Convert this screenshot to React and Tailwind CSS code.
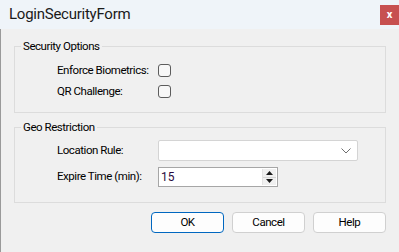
import React, { useState } from 'react';

const font = { fontFamily: 'Roboto, "Noto Sans", sans-serif' };

const Check = ({ checked, onChange }) => (
  <button
    onClick={onChange}
    className="w-[13px] h-[13px] rounded-[3px] border border-[#5c5c5c] bg-[#f7f7f7] flex items-center justify-center"
  >
    {checked && (
      <svg width="9" height="9" viewBox="0 0 9 9">
        <path d="M1 4.5 L3.5 7 L8 1.5" fill="none" stroke="#1a1a1a" strokeWidth="1.3" />
      </svg>
    )}
  </button>
);

const Group = ({ title, children, className }) => (
  <fieldset className={`mx-[13px] border border-[#dcdcdc] ${className}`}>
    <legend className="ml-[6px] px-[2px] text-[11.5px] tracking-[-0.45px] leading-[16px] text-black whitespace-nowrap">
      {title}
    </legend>
    {children}
  </fieldset>
);

export default function App() {
  const [bio, setBio] = useState(false);
  const [qr, setQr] = useState(false);
  const [minutes, setMinutes] = useState(15);

  return (
    <div className="w-[399px] h-[252px] bg-[#f0f0f0] overflow-hidden flex flex-col text-black" style={font}>
      <div className="h-[29px] shrink-0 bg-[#eff4f9] flex justify-between">
        <div className="pl-[9px] pt-[5px] text-[15px] tracking-[-0.25px] leading-[19px] text-[#1a1a1a]">LoginSecurityForm</div>
        <button className="mt-[5px] w-[19px] h-[20px] bg-[#c75050] text-white text-[11px] font-bold leading-[20px] flex items-center justify-center">
          x
        </button>
      </div>

      <div className="flex-1 flex flex-col border-l border-[#9a9a9a] text-[11.5px] tracking-[-0.45px] whitespace-nowrap">
        <Group title="Security Options" className="mt-[9px] pb-[10px]">
          <div className="pt-[6px] pl-[42px] grid grid-cols-[101px_auto] auto-rows-[21px] items-center">
            <span>Enforce Biometrics:</span>
            <Check checked={bio} onChange={() => setBio(!bio)} />
            <span>QR Challenge:</span>
            <Check checked={qr} onChange={() => setQr(!qr)} />
          </div>
        </Group>

        <Group title="Geo Restriction" className="mt-[6px] pb-[15px]">
          <div className="pt-[5px] pl-[42px] grid grid-cols-[101px_auto] gap-y-[6px] items-center">
            <span>Location Rule:</span>
            <div className="w-[200px] h-[21px] bg-white border border-[#d4d4d4] rounded-[2px] flex items-center justify-end pr-[6px]">
              <svg width="10" height="6" viewBox="0 0 10 6">
                <path d="M0.5 0.5 L5 5 L9.5 0.5" fill="none" stroke="#6e6e6e" strokeWidth="1" />
              </svg>
            </div>
            <span>Expire Time (min):</span>
            <div className="w-[120px] h-[20px] bg-white border border-[#a6a6a6] flex">
              <span className="flex-1 pl-[2px] leading-[18px] text-[12px] tracking-normal text-[#2a0a40]">{minutes}</span>
              <div className="w-[14px] flex flex-col border-l border-[#e3e3e3] my-[1px] mr-[1px]">
                <button
                  onClick={() => setMinutes(minutes + 1)}
                  className="flex-1 bg-[#f0f0f0] border-b border-[#d6d6d6] flex items-center justify-center"
                >
                  <svg width="7" height="4" viewBox="0 0 7 4"><path d="M0 4 L3.5 0 L7 4Z" fill="#1a1a1a" /></svg>
                </button>
                <button
                  onClick={() => setMinutes(Math.max(0, minutes - 1))}
                  className="flex-1 bg-[#f0f0f0] flex items-center justify-center"
                >
                  <svg width="7" height="4" viewBox="0 0 7 4"><path d="M0 0 L7 0 L3.5 4Z" fill="#1a1a1a" /></svg>
                </button>
              </div>
            </div>
          </div>
        </Group>

        <div className="mt-[9px] pr-[13px] flex justify-end gap-[8px]">
          <button className="w-[73px] h-[21px] rounded-[4px] bg-[#fdfdfd] border border-[#0067c0]">OK</button>
          <button className="w-[73px] h-[21px] rounded-[4px] bg-[#fdfdfd] border border-[#d0d0d0]">Cancel</button>
          <button className="w-[73px] h-[21px] rounded-[4px] bg-[#fdfdfd] border border-[#d0d0d0]">Help</button>
        </div>
      </div>
    </div>
  );
}
